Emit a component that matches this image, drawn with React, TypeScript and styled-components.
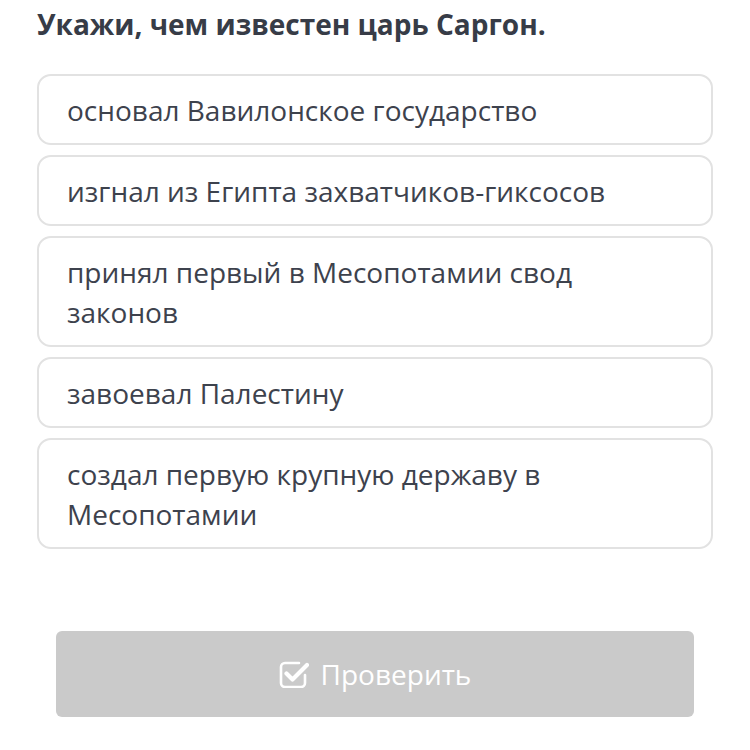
import React from "react";
import styled, { createGlobalStyle } from "styled-components";

const Global = createGlobalStyle`
  html, body { margin: 0; padding: 0; background: #ffffff; }
  body { font-family: "Open Sans", "Noto Sans", sans-serif; }
`;

const Page = styled.div`
  width: 750px;
  height: 750px;
  box-sizing: border-box;
  padding: 5px 37px 0 37px;
  display: flex;
  flex-direction: column;
`;

const Title = styled.h1`
  margin: 0;
  font-size: 28px;
  line-height: 38px;
  font-weight: 700;
  color: #373c47;
`;

const Options = styled.div`
  margin-top: 31px;
  display: flex;
  flex-direction: column;
  gap: 10px;
`;

const Option = styled.div`
  border: 2px solid #e2e2e2;
  border-radius: 14px;
  padding: 13.5px 28px;
  font-size: 28px;
  line-height: 40px;
  color: #3d424d;
`;

const ButtonRow = styled.div`
  margin-top: 82px;
  padding: 0 19px;
`;

const CheckButton = styled.button`
  width: 100%;
  height: 86px;
  border: none;
  border-radius: 6px;
  background: #cacaca;
  color: #ffffff;
  font-family: "Open Sans", "Noto Sans", sans-serif;
  font-size: 28px;
  font-weight: 400;
  display: flex;
  align-items: center;
  justify-content: center;
  gap: 12px;
`;

const CheckIcon = () => (
  <svg width="30" height="28" viewBox="0 0 30 28" fill="none">
    <path
      d="M20 3H6a4 4 0 0 0-4 4v16a4 4 0 0 0 4 4h16a4 4 0 0 0 4-4v-8"
      stroke="#ffffff"
      strokeWidth="2.6"
      strokeLinecap="round"
      strokeLinejoin="round"
    />
    <path
      d="M7.5 13.5l6 6L28 5"
      stroke="#ffffff"
      strokeWidth="4.2"
      strokeLinecap="round"
      strokeLinejoin="round"
    />
  </svg>
);

const options = [
  "основал Вавилонское государство",
  "изгнал из Египта захватчиков-гиксосов",
  "принял первый в Месопотамии свод законов",
  "завоевал Палестину",
  "создал первую крупную державу в Месопотамии",
];

export default function App() {
  return (
    <>
      <Global />
      <Page>
        <Title>Укажи, чем известен царь Саргон.</Title>
        <Options>
          {options.map((o) => (
            <Option key={o}>{o}</Option>
          ))}
        </Options>
        <ButtonRow>
          <CheckButton>
            <CheckIcon />
            Проверить
          </CheckButton>
        </ButtonRow>
      </Page>
    </>
  );
}
